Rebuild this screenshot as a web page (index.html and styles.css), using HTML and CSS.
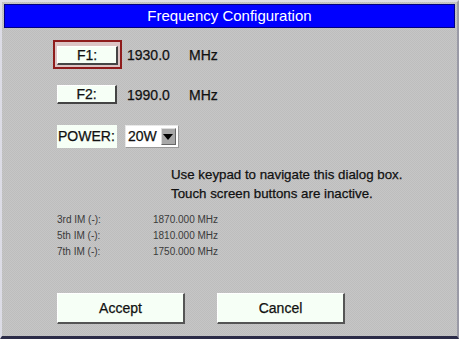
FILE: index.html
```html
<!DOCTYPE html>
<html lang="en">
<head>
    <meta charset="UTF-8">
    <meta name="viewport" content="width=device-width, initial-scale=1.0">
    <title>Frequency Configuration</title>
    <link rel="stylesheet" href="styles.css">
</head>
<body>
    <div class="window">
        <div class="title-bar">Frequency Configuration</div>
        <div class="content">
            <div class="freq-row first">
                <div class="cell-key">
                    <div class="focus-frame">
                        <button class="key-btn">F1:</button>
                    </div>
                </div>
                <span class="freq-value">1930.0</span>
                <span class="unit">MHz</span>
            </div>
            <div class="freq-row second">
                <div class="cell-key">
                    <button class="key-btn plain">F2:</button>
                </div>
                <span class="freq-value">1990.0</span>
                <span class="unit">MHz</span>
            </div>
            <div class="power-row">
                <div class="power-label">POWER:</div>
                <div class="power-select">
                    <span class="power-value">20W</span>
                    <span class="drop-arrow"></span>
                </div>
            </div>
            <div class="notice">
                <div>Use keypad to navigate this dialog box.</div>
                <div>Touch screen buttons are inactive.</div>
            </div>
            <div class="im-list">
                <div class="im-row"><span class="im-label">3rd IM (-):</span><span>1870.000 MHz</span></div>
                <div class="im-row"><span class="im-label">5th IM (-):</span><span>1810.000 MHz</span></div>
                <div class="im-row"><span class="im-label">7th IM (-):</span><span>1750.000 MHz</span></div>
            </div>
            <div class="actions">
                <button class="action-btn">Accept</button>
                <button class="action-btn">Cancel</button>
            </div>
        </div>
    </div>
</body>
</html>
```

FILE: styles.css
```css
body {
    margin: 0;
    font-family: "Liberation Sans", Arial, sans-serif;
    background: #c2c2c2;
}

.window {
    width: 459px;
    height: 339px;
    box-sizing: border-box;
    border-top: 2px solid #dcdce6;
    border-left: 2px solid #dcdce6;
    border-right: 2px solid #9a9aa6;
    border-bottom: 3px solid #2c2c48;
    padding: 2px 2px 0 2px;
    background-color: #c2c2c2;
    background-image: repeating-conic-gradient(#c6c6c6 0 25%, #bdbdbd 0 50%);
    background-size: 2px 2px;
    overflow: hidden;
    color: #111;
    -webkit-text-stroke: 0.25px currentColor;
}

.title-bar {
    height: 24px;
    box-sizing: border-box;
    border: 1px solid #000080;
    background: #0000ff;
    color: #ffffff;
    -webkit-text-stroke: 0;
    font-size: 15px;
    line-height: 22px;
    text-align: center;
}

.content {
    padding-left: 49px;
}

.freq-row {
    display: flex;
    align-items: center;
    font-size: 14px;
}

.freq-row.first {
    margin-top: 12px;
    height: 29px;
}

.freq-row.second {
    margin-top: 16px;
    height: 19px;
}

.cell-key {
    width: 74px;
}

.focus-frame {
    width: 69px;
    height: 29px;
    box-sizing: border-box;
    border: 2px solid #8e1c1c;
    background: #dcc4c4;
    padding: 4px 0 0 2px;
}

.key-btn {
    width: 61px;
    height: 19px;
    box-sizing: border-box;
    padding: 0;
    margin: 0;
    font-family: inherit;
    font-size: 14px;
    color: #111;
    -webkit-text-stroke: 0.25px currentColor;
    background: #f6fff6;
    border-top: 1px solid #ffffff;
    border-left: 1px solid #ffffff;
    border-right: 2px solid #444;
    border-bottom: 2px solid #444;
    display: block;
}

.key-btn.plain {
    margin-left: 4px;
    width: 60px;
}

.freq-value {
    width: 62px;
}

.power-row {
    display: flex;
    align-items: center;
    margin-top: 21px;
    padding-left: 4px;
    height: 23px;
    font-size: 14px;
}

.power-label {
    width: 60px;
    height: 23px;
    line-height: 23px;
    background: #f6fff6;
    padding-left: 1px;
    box-sizing: border-box;
}

.power-select {
    margin-left: 8px;
    width: 54px;
    height: 23px;
    box-sizing: border-box;
    border: 1px solid #e8e8e8;
    border-right-color: #999;
    border-bottom-color: #999;
    background: #fff;
    display: flex;
    align-items: center;
    padding: 2px;
}

.power-value {
    flex: 1;
    line-height: 17px;
}

.drop-arrow {
    width: 15px;
    height: 17px;
    box-sizing: border-box;
    background: #a8a8a8;
    border: 1px solid #666;
    border-top-color: #ddd;
    border-left-color: #ddd;
    position: relative;
}

.drop-arrow::after {
    content: "";
    position: absolute;
    left: 1px;
    top: 5px;
    border-left: 5.5px solid transparent;
    border-right: 5.5px solid transparent;
    border-top: 6px solid #000;
}

.notice {
    margin-top: 17px;
    padding-left: 118px;
    font-size: 13.3px;
    line-height: 19px;
}

.im-list {
    margin-top: 9px;
    padding-left: 4px;
    font-size: 10px;
    line-height: 16px;
    color: #3a3a3a;
    -webkit-text-stroke: 0;
}

.im-row {
    display: flex;
}

.im-label {
    width: 96px;
}

.actions {
    display: flex;
    gap: 32px;
    margin-top: 33px;
    padding-left: 4px;
}

.action-btn {
    width: 128px;
    height: 31px;
    box-sizing: border-box;
    padding: 0;
    font-family: inherit;
    font-size: 14px;
    color: #111;
    -webkit-text-stroke: 0.25px currentColor;
    background: #f6fff6;
    border-top: 1px solid #ffffff;
    border-left: 1px solid #ffffff;
    border-right: 2px solid #555;
    border-bottom: 2px solid #555;
}
```
